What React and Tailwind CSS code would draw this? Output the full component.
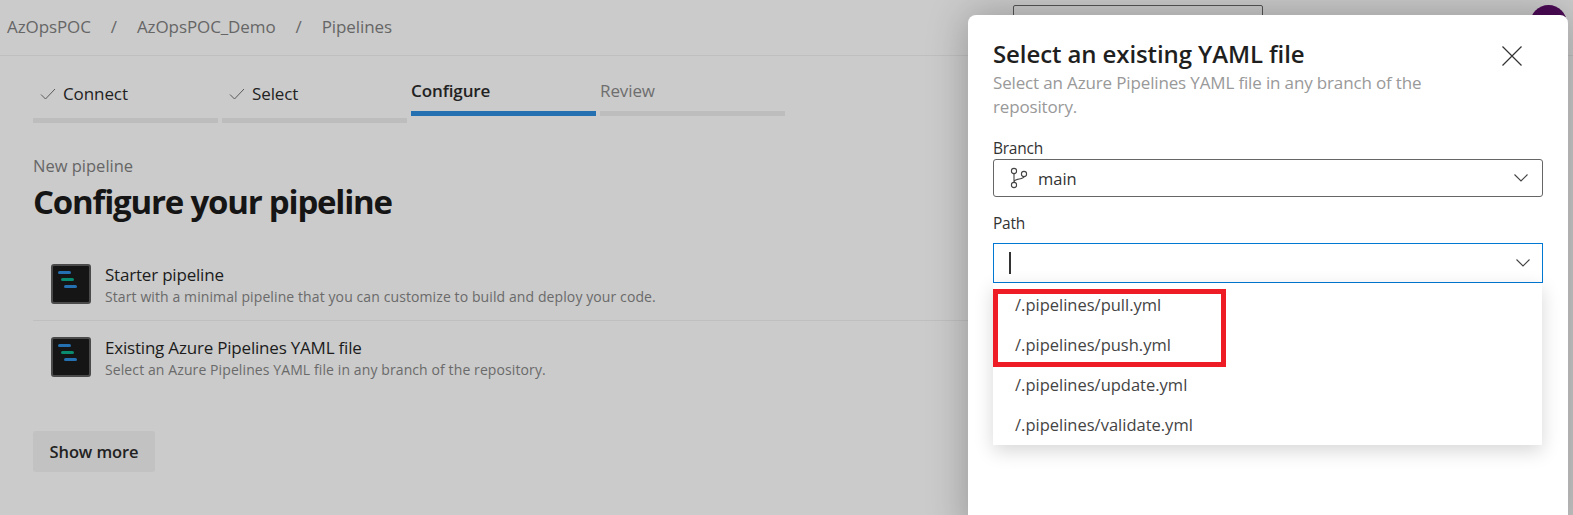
import React from "react";

const font = { fontFamily: '"Open Sans", "Noto Sans", sans-serif' };

function Check() {
  return (
    <svg width="16" height="16" viewBox="0 0 16 16" fill="none" stroke="#5a5a5a" strokeWidth="1" className="shrink-0">
      <path d="M1 8.5 L5.5 13 L15 3" />
    </svg>
  );
}

function Chevron() {
  return (
    <svg width="16" height="10" viewBox="0 0 16 10" fill="none" stroke="#444" strokeWidth="1.1">
      <path d="M1.5 1.5 L8 8 L14.5 1.5" />
    </svg>
  );
}

function PipeIcon() {
  return (
    <div className="w-10 h-10 shrink-0 rounded-[3px] bg-[#151515] border-2 border-[#4a4a4a] relative">
      <div className="absolute left-[5px] top-[5px] w-[13px] h-[3px] rounded-full bg-[#2470b0]" />
      <div className="absolute left-[8px] top-[12px] w-[13px] h-[3px] rounded-full bg-[#0a8a6f]" />
      <div className="absolute left-[11px] top-[19px] w-[13px] h-[3px] rounded-full bg-[#2470b0]" />
    </div>
  );
}

function Step({ label, done, active, dim }) {
  return (
    <div className={"w-[185px] flex flex-col " + (done ? "pt-[27px]" : "pt-[24px]")}>
      <div className={"h-[22px] flex items-center gap-[7px] text-[17px] leading-[22px] tracking-[-0.1px] " + (done ? "pl-[7px] " : "pl-0 ") + (active ? "font-semibold text-[#222]" : dim ? "text-[#6e6e6e]" : "text-[#222]")}>
        {done && <Check />}
        <span>{label}</span>
      </div>
      <div className={"h-[5px] " + (done ? "mt-[13px] " : "mt-[9px] ") + (active ? "bg-[#2470b0]" : "bg-[#bdbdbd]")} />
    </div>
  );
}

function Row({ title, desc, border, second }) {
  return (
    <div className={(second ? "h-[71px] " : "h-[73px] ") + "flex items-center gap-[14px] pl-[18px] " + (border ? "border-b border-[#bfbfbf]" : "")}>
      <PipeIcon />
      <div className="flex flex-col pt-[3px]">
        <span className="mb-[1px] text-[17px] leading-[22px] tracking-[-0.2px] text-[#1c1c1c]">{title}</span>
        <span className="text-[14px] leading-[20px] tracking-[0.1px] text-[#6a6a6a]">{desc}</span>
      </div>
    </div>
  );
}

export default function App() {
  return (
    <div style={font} className="relative w-[1573px] h-[515px] overflow-hidden bg-[#cbcbcb]">
      <header className="h-[56px] border-b border-[#bfbfbf] flex items-start pl-[7px] pr-[6px]">
        <div className="flex items-center gap-[20px] h-[53px] text-[17px] tracking-[-0.1px] text-[#666]">
          <span>AzOpsPOC</span>
          <span>/</span>
          <span>AzOpsPOC_Demo</span>
          <span>/</span>
          <span>Pipelines</span>
        </div>
        <div className="ml-auto flex items-start gap-[267px] pt-[5px]">
          <div className="w-[250px] h-[38px] border border-[#555] rounded-[2px]" />
          <div className="w-[37px] h-[37px] rounded-full bg-[#4b0a55]" />
        </div>
      </header>

      <main className="px-[33px]">
        <div className="flex gap-[4px] items-start">
          <Step label="Connect" done />
          <Step label="Select" done />
          <Step label="Configure" active />
          <Step label="Review" dim />
        </div>

        <div className="mt-[33px] text-[16.5px] leading-[20px] text-[#666]">New pipeline</div>
        <h1 className="mt-[1px] text-[33px] leading-[50px] font-bold tracking-[-1.2px] text-[#151515]">Configure your pipeline</h1>

        <div className="mt-[21px] w-[1100px]">
          <Row title="Starter pipeline" desc="Start with a minimal pipeline that you can customize to build and deploy your code." border />
          <Row title="Existing Azure Pipelines YAML file" desc="Select an Azure Pipelines YAML file in any branch of the repository." second />
        </div>

        <button className="mt-[39px] w-[122px] h-[41px] pt-[2px] rounded-[3px] bg-[#c2c2c2] text-[16.5px] font-semibold tracking-[-0.1px] text-[#222]">
          Show more
        </button>
      </main>

      <aside className="absolute left-[968px] top-[15px] w-[600px] h-[520px] bg-white rounded-t-[8px] shadow-[0_0_40px_rgba(0,0,0,0.28)] pl-[25px] pr-[25px]">
        <div className="flex items-start justify-between pt-[22px]">
          <h2 className="text-[24px] leading-[34px] font-semibold tracking-[-0.1px] text-[#1f1f1f]">Select an existing YAML file</h2>
          <svg width="22" height="22" viewBox="0 0 22 22" fill="none" stroke="#333" strokeWidth="1.2" className="mt-[8px] mr-[20px]">
            <path d="M1.5 1.5 L20.5 20.5 M20.5 1.5 L1.5 20.5" />
          </svg>
        </div>
        <p className="w-[470px] text-[17px] leading-[24px] tracking-[-0.15px] text-[#999]">
          Select an Azure Pipelines YAML file in any branch of the repository.
        </p>

        <div className="mt-[19px] text-[15.5px] leading-[21px] tracking-[-0.25px] text-[#333]">Branch</div>
        <div className="w-[550px] h-[38px] border border-[#666] rounded-[3px] flex items-center pl-[16px] pr-[13px]">
          <svg width="18" height="22" viewBox="0 0 18 22" fill="none" stroke="#444" strokeWidth="1.1">
            <circle cx="4" cy="4" r="2.6" />
            <circle cx="4" cy="18" r="2.6" />
            <circle cx="14" cy="7" r="2.6" />
            <path d="M4 6.6 V15.4 M14 9.6 C14 13 4 11 4 15" />
          </svg>
          <span className="ml-[10px] mt-[3px] text-[16.5px] text-[#333]">main</span>
          <span className="ml-auto flex"><Chevron /></span>
        </div>

        <div className="mt-[15px] text-[15.5px] leading-[22px] tracking-[-0.25px] text-[#333]">Path</div>
        <div className="mt-[9px] w-[550px] h-[40px] border border-[#0078d4] flex items-center pl-[15px] pr-[11px]">
          <div className="w-[2px] h-[22px] bg-[#333]" />
          <span className="ml-auto flex"><Chevron /></span>
        </div>

        <div className="relative w-[549px] h-[162px] shadow-[0_6px_18px_rgba(0,0,0,0.16)] bg-white">
          <div className="flex flex-col pl-[22px] pt-[2px] text-[16.5px] text-[#444]">
            <div className="h-[40px] flex items-center">/.pipelines/pull.yml</div>
            <div className="h-[40px] flex items-center">/.pipelines/push.yml</div>
            <div className="h-[40px] flex items-center">/.pipelines/update.yml</div>
            <div className="h-[40px] flex items-center">/.pipelines/validate.yml</div>
          </div>
          <div className="absolute left-0 top-[6px] w-[233px] h-[78px] border-[5px] border-[#ee1c25]" />
        </div>
      </aside>
    </div>
  );
}
